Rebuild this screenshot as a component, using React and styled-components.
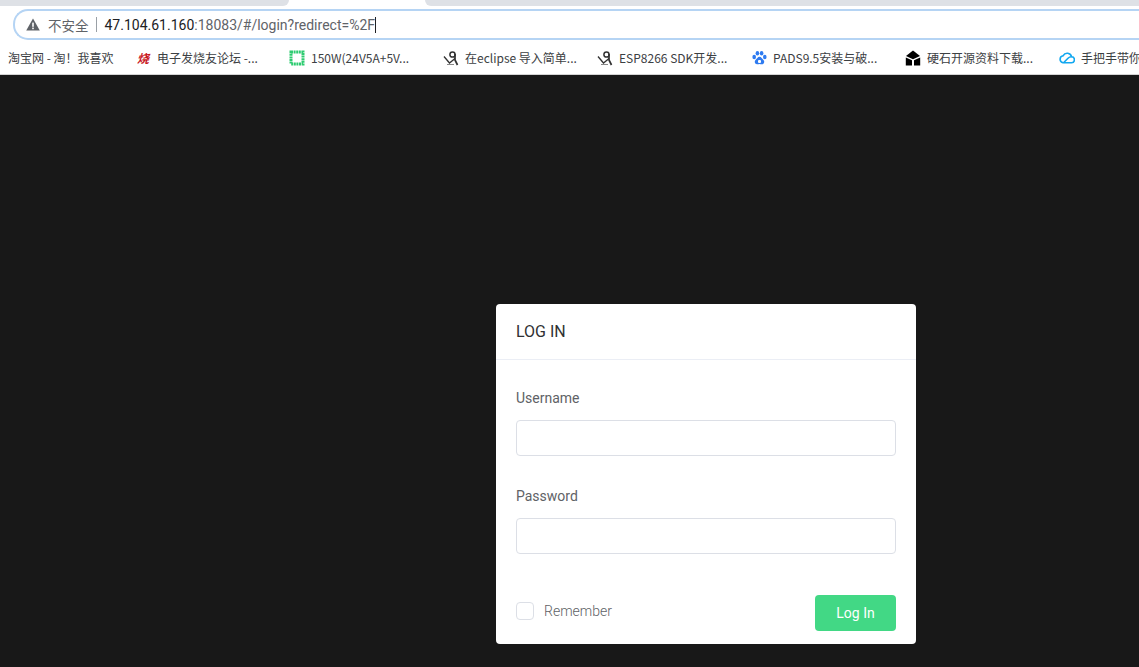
import styled, { createGlobalStyle } from "styled-components";

const GlobalStyle = createGlobalStyle`
  html, body {
    margin: 0;
    height: 100%;
    background: #181818;
    overflow: hidden;
  }
  * {
    box-sizing: border-box;
  }
`;

const Page = styled.div`
  width: 1139px;
  height: 667px;
  display: flex;
  flex-direction: column;
  overflow: hidden;
`;

const Chrome = styled.header`
  height: 75px;
  flex: none;
  background: #fff;
  border-bottom: 1px solid #d4d4d4;
  font-family: "Noto Sans CJK SC", "Liberation Sans", sans-serif;
`;

const TabStrip = styled.div`
  height: 6px;
  display: flex;
  background: #dee1e6;
`;

const ActiveTab = styled.div`
  width: 130px;
  margin-left: 295px;
  background: #fff;
  border-radius: 0 0 0 0;
  box-shadow: -6px 0 0 #fff;
  border-bottom-left-radius: 6px;
`;

const LeftGap = styled.div`
  width: 289px;
  background: #dee1e6;
  border-bottom-right-radius: 8px;
`;

const TabRow = styled(TabStrip)`
  background: #fff;
`;

const RightGap = styled.div`
  flex: 1;
  background: #dee1e6;
  border-bottom-left-radius: 8px;
`;

const OpenTab = styled.div`
  width: 136px;
  background: #fff;
`;

const AddressWrap = styled.div`
  padding: 3px 0 0 13px;
  height: 34px;
`;

const AddressBar = styled.div`
  height: 31px;
  display: flex;
  align-items: center;
  border: 2px solid #b5d4f4;
  border-right: 0;
  border-radius: 15px 0 0 15px;
  padding-left: 11px;
  font-size: 14px;
  color: #5f6368;
  white-space: nowrap;
`;

const Insecure = styled.span`
  margin-left: 8px;
  font-size: 13.5px;
  color: #5f6368;
`;

const Divider = styled.span`
  width: 1px;
  height: 15px;
  margin: 0 8px 0 7px;
  background: #9aa0a6;
`;

const Host = styled.span`
  color: #202124;
  font-family: "Roboto", sans-serif;
`;

const Rest = styled.span`
  color: #5f6368;
  font-family: "Roboto", sans-serif;
`;

const Caret = styled.span`
  width: 1px;
  height: 16px;
  background: #202124;
`;

const Bookmarks = styled.nav`
  display: flex;
  align-items: center;
  height: 35px;
  padding-left: 8px;
  overflow: hidden;
`;

const Bookmark = styled.div`
  flex: none;
  width: ${(p) => p.$width || 154}px;
  display: flex;
  align-items: center;
  gap: 6px;
  font-size: 12px;
  color: #3c4043;
  white-space: nowrap;
`;

const FavSlot = styled.span`
  width: 16px;
  height: 16px;
  flex: none;
  display: flex;
  align-items: center;
  justify-content: center;
`;

const BurnGlyph = styled.span`
  font-size: 12px;
  font-weight: 700;
  font-style: italic;
  color: #c8161d;
  line-height: 16px;
`;

const Main = styled.main`
  flex: 1;
  background: #181818;
  padding: 229px 0 0 496px;
`;

const Card = styled.section`
  width: 420px;
  height: 340px;
  background: #fff;
  border-radius: 4px;
  font-family: "Roboto", sans-serif;
`;

const CardHead = styled.div`
  height: 56px;
  padding: 0 20px;
  display: flex;
  align-items: center;
  border-bottom: 1px solid #ebeef5;
  font-size: 16px;
  color: #303133;
`;

const Form = styled.form`
  padding: 20px 20px 0;
`;

const Field = styled.div`
  margin-bottom: 22px;
`;

const Label = styled.label`
  display: block;
  height: 40px;
  line-height: 36px;
  font-size: 14px;
  color: #606266;
`;

const Input = styled.input`
  display: block;
  width: 100%;
  height: 36px;
  border: 1px solid #dcdfe6;
  border-radius: 4px;
  background: #fff;
  outline: none;
`;

const Footer = styled.div`
  display: flex;
  justify-content: space-between;
  align-items: center;
  margin-top: 41px;
`;

const Remember = styled.label`
  display: flex;
  align-items: center;
  gap: 10px;
  font-size: 14px;
  font-weight: 300;
  color: #606266;
  margin-top: -4px;
`;

const Check = styled.span`
  width: 18px;
  height: 18px;
  border: 1px solid #dcdfe6;
  border-radius: 4px;
  background: #fff;
`;

const Submit = styled.button`
  width: 81px;
  height: 36px;
  border: 0;
  border-radius: 4px;
  background: #42d885;
  color: #fff;
  font-family: inherit;
  font-size: 14px;
`;

const WarnIcon = () => (
  <svg width="14" height="13" viewBox="0 0 14 13">
    <path d="M7 .5 13.8 12.6H.2Z" fill="#5f6368" />
    <rect x="6.2" y="4.6" width="1.6" height="4.2" fill="#fff" />
    <rect x="6.2" y="9.6" width="1.6" height="1.6" fill="#fff" />
  </svg>
);

const GreenIcon = () => (
  <svg width="16" height="16" viewBox="0 0 16 16">
    <rect x="2" y="2" width="12" height="12" fill="none" stroke="#2ecc71" strokeWidth="3" strokeDasharray="2 .6" />
  </svg>
);

const HookIcon = () => (
  <svg width="16" height="16" viewBox="0 0 16 16" fill="none" stroke="#333">
    <circle cx="9.5" cy="4.5" r="2.6" strokeWidth="1.5" />
    <path d="M1 6.5 6.5 13 12 8.5" strokeWidth="1.3" />
    <path d="M12 4v6l2.5 5" strokeWidth="1.7" />
    <path d="M4 14.5h7" stroke="#888" />
  </svg>
);

const PawIcon = () => (
  <svg width="15" height="16" viewBox="0 0 15 16" fill="#2f7bf0">
    <ellipse cx="2.2" cy="7" rx="1.8" ry="2.2" />
    <ellipse cx="5.4" cy="3.2" rx="1.8" ry="2.3" />
    <ellipse cx="9.6" cy="3.2" rx="1.8" ry="2.3" />
    <ellipse cx="12.8" cy="7" rx="1.8" ry="2.2" />
    <path d="M7.5 6.8c-2 0-2.4 2-3.8 3-1.6 1.2-1.2 4.4 1.4 4.5 1 0 1.600-.4 2.400-.4s1.400.4 2.400.4c2.600-.1 3-3.300 1.400-4.500-1.400-1-1.800-3-3.800-3Z" />
    <rect x="6" y="10" width="3" height="3" rx="1" fill="#fff" />
  </svg>
);

const StoneIcon = () => (
  <svg width="16" height="16" viewBox="0 0 16 16" fill="#000">
    <path d="M8 .5 15 6 8 9.200 1 6Z" />
    <path d="M.8 7.500 7 10.300v5.200H.8Z" />
    <path d="M15.200 7.500 9 10.300v5.200h6.200Z" />
  </svg>
);

const CloudIcon = () => (
  <svg width="16" height="13" viewBox="0 0 16 13" fill="none" stroke="#12a8f0" strokeWidth="1.600">
    <path d="M4 11.800h8.200a3 3 0 0 0 .4-6A4.500 4.500 0 0 0 4.200 4.700 3.600 3.600 0 0 0 4 11.800Z" />
    <path d="M4.500 11.800 9 7.200c1-1 2-1.400 3.500-1.400" />
  </svg>
);

const items = [
  { label: "电子发烧友论坛 -...", icon: <BurnGlyph>烧</BurnGlyph> },
  { label: "150W(24V5A+5V...", icon: <GreenIcon /> },
  { label: "在eclipse 导入简单...", icon: <HookIcon /> },
  { label: "ESP8266 SDK开发...", icon: <HookIcon /> },
  { label: "PADS9.5安装与破...", icon: <PawIcon /> },
  { label: "硬石开源资料下载...", icon: <StoneIcon /> },
  { label: "手把手带你", icon: <CloudIcon /> },
];

export default function App() {
  return (
    <>
      <GlobalStyle />
      <Page>
        <Chrome>
          <TabRow>
            <LeftGap />
            <OpenTab />
            <RightGap />
          </TabRow>
          <AddressWrap>
            <AddressBar>
              <WarnIcon />
              <Insecure>不安全</Insecure>
              <Divider />
              <Host>47.104.61.160</Host>
              <Rest>:18083/#/login?redirect=%2F</Rest>
              <Caret />
            </AddressBar>
          </AddressWrap>
          <Bookmarks>
            <Bookmark $width={127}>淘宝网 - 淘！我喜欢</Bookmark>
            {items.map((item) => (
              <Bookmark key={item.label}>
                <FavSlot>{item.icon}</FavSlot>
                {item.label}
              </Bookmark>
            ))}
          </Bookmarks>
        </Chrome>
        <Main>
          <Card>
            <CardHead>LOG IN</CardHead>
            <Form>
              <Field>
                <Label>Username</Label>
                <Input type="text" />
              </Field>
              <Field>
                <Label>Password</Label>
                <Input type="password" />
              </Field>
              <Footer>
                <Remember>
                  <Check />
                  Remember
                </Remember>
                <Submit type="button">Log In</Submit>
              </Footer>
            </Form>
          </Card>
        </Main>
      </Page>
    </>
  );
}
